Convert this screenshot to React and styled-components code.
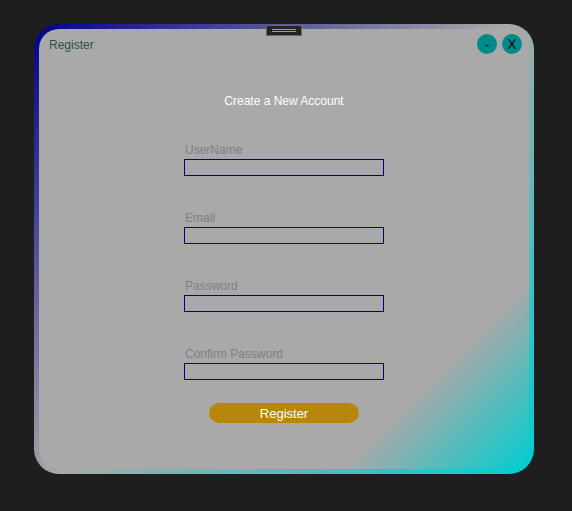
import React from 'react'
import styled, { createGlobalStyle } from 'styled-components'

const GlobalStyle = createGlobalStyle`
  html, body {
    margin: 0;
    padding: 0;
    background: #1e1e1e;
    font-family: Arial, "Liberation Sans", Helvetica, sans-serif;
  }
  #root {
    padding: 24px 0 0 34px;
  }
`

const Window = styled.div`
  position: relative;
  box-sizing: border-box;
  width: 500px;
  height: 450px;
  padding: 5px;
  border-radius: 25px;
  background: linear-gradient(135deg, #00008b 0%, #a9a9a9 50%, #00ced1 100%);
`

const Panel = styled.div`
  box-sizing: border-box;
  height: 100%;
  border-radius: 20px;
  background: linear-gradient(135deg, #a9a9a9 80%, #00ced1 100%);
  display: flex;
  flex-direction: column;
  align-items: center;
`

const Handle = styled.div`
  position: absolute;
  top: 1px;
  left: 50%;
  transform: translateX(-50%);
  box-sizing: border-box;
  width: 36px;
  height: 11px;
  background: #242424;
  border: 1px solid #6a6a6a;
  display: flex;
  align-items: center;
  justify-content: center;

  &::before {
    content: '';
    width: 24px;
    height: 1px;
    border-top: 1px solid #9a9a9a;
    border-bottom: 1px solid #9a9a9a;
  }
`

const TitleBar = styled.div`
  align-self: stretch;
  display: flex;
  align-items: center;
  justify-content: space-between;
  padding: 5px 7px 0 10px;
`

const Title = styled.span`
  font-size: 12px;
  line-height: 14px;
  padding-top: 2px;
  color: #2f4f4f;
`

const Controls = styled.div`
  display: flex;
  gap: 5px;
`

const RoundButton = styled.button`
  width: 20px;
  height: 20px;
  padding: 0;
  border: none;
  border-radius: 50%;
  background: #008b8b;
  color: #000;
  font-family: Arial, "Liberation Sans", sans-serif;
  font-size: ${props => (props.big ? '14px' : '13px')};
  line-height: 21px;
  text-align: center;
`

const Heading = styled.h2`
  margin: 40px 0 0;
  font-size: 12px;
  line-height: 14px;
  font-weight: normal;
  color: #fff;
`

const Form = styled.form`
  display: flex;
  flex-direction: column;
  align-items: center;
  gap: 34px;
  margin-top: 34px;
`

const Field = styled.div`
  display: flex;
  flex-direction: column;
  gap: 2px;
`

const Label = styled.label`
  font-size: 12px;
  line-height: 14px;
  color: #808080;
  padding: 1px 0 0 1px;
`

const Input = styled.input`
  box-sizing: border-box;
  width: 200px;
  height: 17px;
  margin: 0;
  padding: 0 3px;
  border: 1px solid #00008b;
  background: transparent;
  outline: none;
`

const Submit = styled.button`
  width: 150px;
  height: 20px;
  margin-top: -11px;
  padding: 0;
  border: none;
  border-radius: 10px;
  background: #b8860b;
  color: #fff;
  font-family: Arial, "Liberation Sans", sans-serif;
  font-size: 13px;
  line-height: 22px;
`

const fields = ['UserName', 'Email', 'Password', 'Confirm Password']

export default function App() {
  return (
    <>
      <GlobalStyle />
      <Window>
        <Handle />
        <Panel>
          <TitleBar>
            <Title>Register</Title>
            <Controls>
              <RoundButton>-</RoundButton>
              <RoundButton big>X</RoundButton>
            </Controls>
          </TitleBar>
          <Heading>Create a New Account</Heading>
          <Form onSubmit={e => e.preventDefault()}>
            {fields.map(name => (
              <Field key={name}>
                <Label>{name}</Label>
                <Input type={name.includes('Password') ? 'password' : 'text'} />
              </Field>
            ))}
            <Submit type="submit">Register</Submit>
          </Form>
        </Panel>
      </Window>
    </>
  )
}
